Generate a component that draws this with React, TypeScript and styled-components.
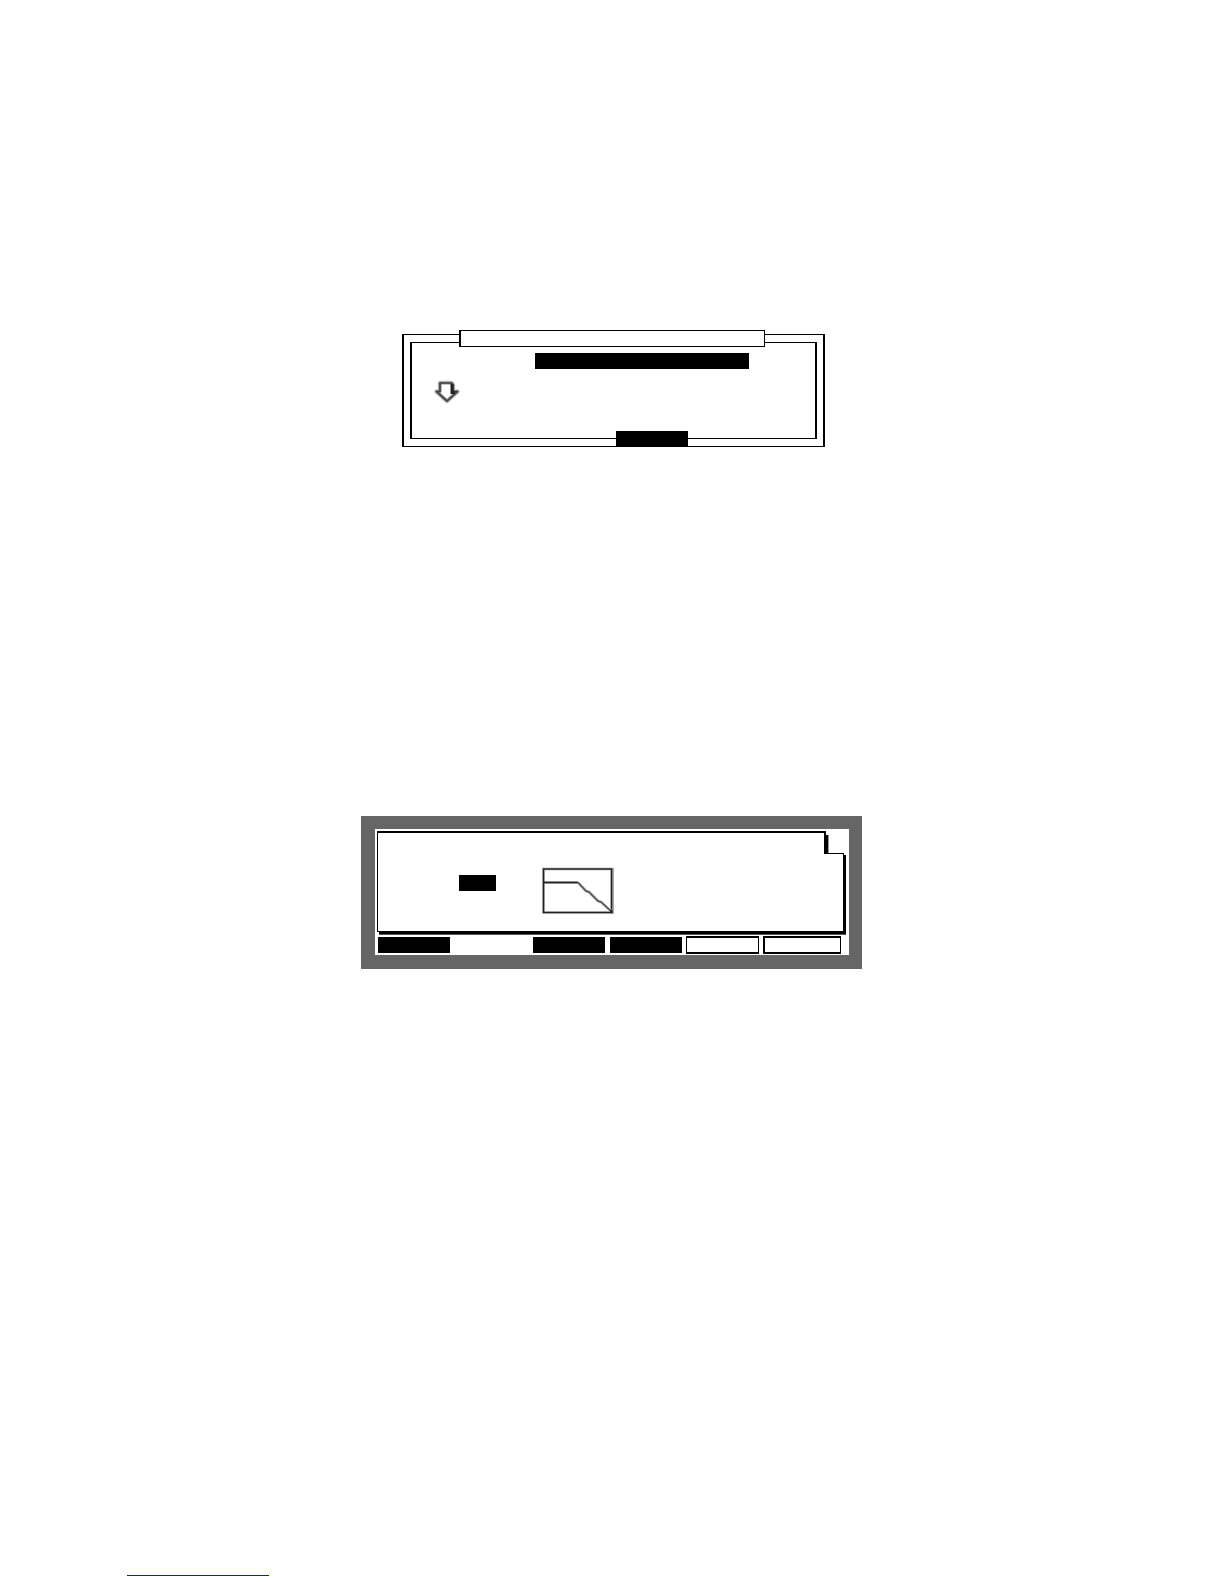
import React from "react";
import styled, { createGlobalStyle } from "styled-components";

const GlobalStyle = createGlobalStyle`
  *, *::before, *::after { box-sizing: border-box; }
  body {
    margin: 0;
    background: #fff;
    color: #000;
    font-family: "Liberation Sans", Arial, sans-serif;
    font-size: 12px;
  }
  button, input {
    margin: 0;
    padding: 0;
    border: 0;
    border-radius: 0;
    font: inherit;
  }
`;

const Page = styled.main`
  display: flex;
  flex-direction: column;
  align-items: flex-start;
  padding: 330px 127px 8px;
`;

const Figure = styled.section<{ $indent: number; $space: number }>`
  margin-left: ${(p) => p.$indent}px;
  margin-bottom: ${(p) => p.$space}px;
`;

/* Double-framed dialog window */
const DialogFrame = styled.div`
  position: relative;
  width: 423px;
  margin-top: 4px;
  padding: 7px 6px;
  border: solid #000;
  border-width: 1px 2px;
`;

const DialogBody = styled.div`
  height: 97px;
  padding: 10px 66px 0 22px;
  border: solid #000;
  border-width: 1px 2px;
`;

const DialogTitle = styled.header`
  position: absolute;
  top: -5px;
  left: 55px;
  width: 306px;
  height: 17px;
  border: 1px solid #000;
  border-left-width: 2px;
  background: #fff;
`;

const NameField = styled.input`
  display: block;
  width: 214px;
  height: 16px;
  margin-left: auto;
  background: #000;
  color: #fff;
`;

const DialogKey = styled.button`
  position: absolute;
  right: 135px;
  bottom: -1px;
  width: 72px;
  height: 16px;
  background: #000;
  color: #fff;
`;

const ArrowIcon = styled.svg`
  display: block;
  width: 26px;
  height: 24px;
  margin-top: 11px;
`;

/* LCD screen with bezel */
const Screen = styled.div`
  width: 501px;
  padding: 2px 5px 1px 2px;
  border: solid #666;
  border-width: 13px 13px 14px 14px;
  background: #fff;
`;

const PanelTab = styled.div`
  height: 22px;
  margin-right: 18px;
  border: solid #000;
  border-width: 2px 2px 0 1px;
  box-shadow: 2px 4px 0 #000, 3px 4px 0 #999;
`;

const PanelBody = styled.div`
  position: relative;
  display: flex;
  align-items: flex-start;
  gap: 45px;
  height: 79px;
  padding: 13px 0 0 81px;
  border: solid #000;
  border-width: 0 1px 1px;
  background: #fff;
  box-shadow: 2px 2px 0 #000, 2px 3px 0 #555;

  &::before {
    content: "";
    position: absolute;
    top: 0;
    right: 0;
    width: 19px;
    height: 1px;
    background: #000;
  }
`;

const ValueField = styled.input`
  width: 37px;
  height: 16px;
  margin-top: 9px;
  background: #000;
  color: #fff;
`;

const Graph = styled.svg`
  display: block;
  width: 74px;
  height: 49px;
`;

const SoftKeys = styled.nav`
  display: grid;
  grid-template-columns: 73px 74px 73px 72px 73px 78px;
  column-gap: 4px;
  align-items: center;
  height: 18px;
  margin: 4px 0 0 1px;
`;

const SoftKey = styled.button<{ $kind: "filled" | "blank" | "outlined" }>`
  width: ${(p) => (p.$kind === "filled" ? "72px" : "100%")};
  height: ${(p) => (p.$kind === "outlined" ? 18 : 16)}px;
  background: ${(p) => (p.$kind === "filled" ? "#000" : "#fff")};
  color: ${(p) => (p.$kind === "filled" ? "#fff" : "#000")};

  && {
    border: ${(p) => (p.$kind === "outlined" ? "solid #000" : "0")};
    ${(p) => p.$kind === "outlined" && "border-width: 2px 1px;"}
  }

  &&:last-child {
    border-left-width: 2px;
  }
`;

const FooterLink = styled.a`
  display: block;
  width: 142px;
  height: 16px;
  border-bottom: 1px solid #1c1c90;
`;

const softKeys = ["filled", "blank", "filled", "filled", "outlined", "outlined"] as const;

const arrow = "M6 3H17.5L19 5V11.5H23.5L13 21L2.5 11.5H6Z";

export default function App() {
  return (
    <>
      <GlobalStyle />
      <Page>
        <Figure $indent={275} $space={369}>
          <DialogFrame role="group" aria-label="Dialog">
            <DialogTitle />
            <DialogBody>
              <NameField aria-label="Name" />
              <ArrowIcon viewBox="0 0 26 24" fill="none" aria-hidden="true">
                <path d={arrow} stroke="#ddd" strokeWidth="5" strokeLinejoin="round" />
                <path d={arrow} fill="#fff" stroke="#888" strokeWidth="3.2" strokeLinejoin="round" />
                <path d={arrow} stroke="#444" strokeWidth="1.6" strokeLinejoin="round" />
                <path d="M18 4V12.5H21" stroke="#222" strokeWidth="3" />
              </ArrowIcon>
            </DialogBody>
            <DialogKey type="button" aria-label="Close" />
          </DialogFrame>
        </Figure>

        <Figure $indent={234} $space={591}>
          <Screen>
            <PanelTab />
            <PanelBody>
              <ValueField aria-label="Value" />
              <Graph viewBox="0 0 74 49" fill="none" aria-hidden="true">
                <path d="M2.5 3H71V46.5H2.5Z" stroke="#ccc" strokeWidth="3" />
                <path d="M71.5 2V48" stroke="#aaa" strokeWidth="3" />
                <path d="M2.5 3H70.5V46.5H2.5Z" stroke="#222" strokeWidth="1.6" />
                <path d="M2.5 16.5H37" stroke="#222" strokeWidth="1.8" />
                <path d="M37 16.5L45 25L48 26L57 35L60 36L71 46" stroke="#bbb" strokeWidth="3" />
                <path d="M37 16.5L45 25L48 26L57 35L60 36L71 46" stroke="#555" strokeWidth="1.6" />
                <path d="M69 44H71.5V47H69Z" fill="#222" />
              </Graph>
            </PanelBody>
            <SoftKeys aria-label="Soft keys">
              {softKeys.map((kind, i) => (
                <SoftKey key={i} type="button" $kind={kind} aria-label={`F${i + 1}`} />
              ))}
            </SoftKeys>
          </Screen>
        </Figure>

        <FooterLink href="#" aria-label="Website" />
      </Page>
    </>
  );
}
